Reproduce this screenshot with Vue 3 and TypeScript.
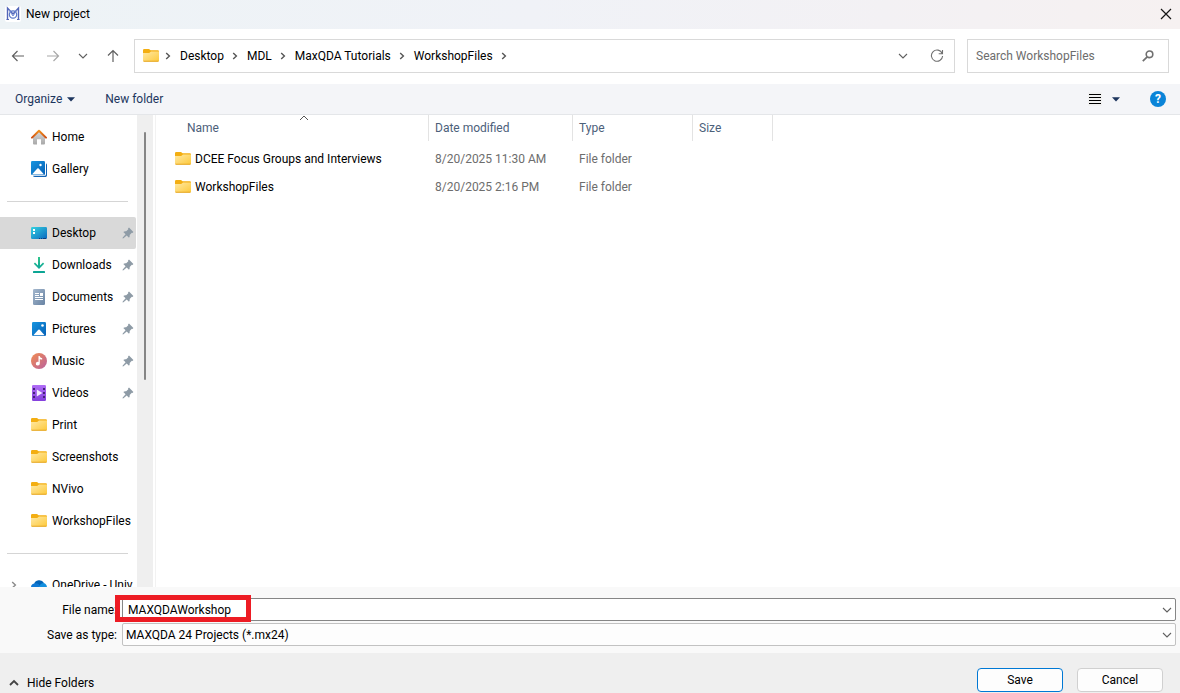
<script setup lang="ts">
import { ref } from 'vue'

interface Place {
  name: string
  icon: string
  pinned?: boolean
  selected?: boolean
}

interface Entry {
  name: string
  modified: string
  type: string
  size: string
}

const crumbs: string[] = ['Desktop', 'MDL', 'MaxQDA Tutorials', 'WorkshopFiles']

const placeGroups: Place[][] = [
  [
    { name: 'Home', icon: 'home' },
    { name: 'Gallery', icon: 'gallery' },
  ],
  [
    { name: 'Desktop', icon: 'desktop', pinned: true, selected: true },
    { name: 'Downloads', icon: 'downloads', pinned: true },
    { name: 'Documents', icon: 'documents', pinned: true },
    { name: 'Pictures', icon: 'pictures', pinned: true },
    { name: 'Music', icon: 'music', pinned: true },
    { name: 'Videos', icon: 'videos', pinned: true },
    { name: 'Print', icon: 'folder' },
    { name: 'Screenshots', icon: 'folder' },
    { name: 'NVivo', icon: 'folder' },
    { name: 'WorkshopFiles', icon: 'folder' },
  ],
]

const entries: Entry[] = [
  { name: 'DCEE Focus Groups and Interviews', modified: '8/20/2025 11:30 AM', type: 'File folder', size: '' },
  { name: 'WorkshopFiles', modified: '8/20/2025 2:16 PM', type: 'File folder', size: '' },
]

const query = ref('')
const fileName = ref('MAXQDAWorkshop')
const fileType = ref('mx24')
</script>

<template>
  <div class="dialog">
    <svg class="defs" aria-hidden="true">
      <defs>
        <linearGradient id="g-folder" x1="0" y1="0" x2="1" y2="1">
          <stop offset="0" stop-color="#ffe9a6" /><stop offset="1" stop-color="#fdc93a" />
        </linearGradient>
        <linearGradient id="g-blue" x1="0" y1="0" x2="1" y2="1">
          <stop offset="0" stop-color="#1795e0" /><stop offset="1" stop-color="#0560b6" />
        </linearGradient>
        <linearGradient id="g-desktop" x1="0" y1="0" x2="1" y2="1">
          <stop offset="0" stop-color="#35d3e0" /><stop offset="1" stop-color="#0b67bf" />
        </linearGradient>
        <linearGradient id="g-down" x1="0" y1="0" x2="0" y2="1">
          <stop offset="0" stop-color="#2fc48a" /><stop offset="1" stop-color="#0ba59a" />
        </linearGradient>
        <linearGradient id="g-doc" x1="0" y1="0" x2="1" y2="1">
          <stop offset="0" stop-color="#a5b8ce" /><stop offset="1" stop-color="#6883a3" />
        </linearGradient>
        <linearGradient id="g-music" x1="0" y1="0" x2="1" y2="1">
          <stop offset="0" stop-color="#f28c50" /><stop offset="1" stop-color="#b9619e" />
        </linearGradient>
        <linearGradient id="g-video" x1="0" y1="0" x2="0" y2="1">
          <stop offset="0" stop-color="#b06df6" /><stop offset="1" stop-color="#8440dd" />
        </linearGradient>
        <linearGradient id="g-house" x1="0" y1="0" x2="0" y2="1">
          <stop offset="0" stop-color="#d8d8d8" /><stop offset="1" stop-color="#a8a8a8" />
        </linearGradient>
        <linearGradient id="g-roof" x1="0" y1="0" x2="0" y2="1">
          <stop offset="0" stop-color="#f0901c" /><stop offset="1" stop-color="#cf4f12" />
        </linearGradient>
      </defs>
      <symbol id="i-folder" viewBox="0 0 16 16">
        <path d="M0 2.2Q0 1 1.2 1H6L7.6 2.300H14.9Q16 2.300 16 3.500V7H0Z" fill="#f3ae12" />
        <path d="M0 5H6.200L8 3.400H16V12.600Q16 13.600 15 13.600H1Q0 13.600 0 12.600Z" fill="url(#g-folder)" />
        <path d="M.1 12.800Q.3 13.700 1.200 13.700H14.800Q15.700 13.700 15.900 12.800Z" fill="#e5a520" />
      </symbol>
      <symbol id="i-home" viewBox="0 0 16 16">
        <path d="M2 7.5L8 2L14 7.5V14.4Q14 15.5 13 15.5H10V10.2H6V15.5H3Q2 15.5 2 14.4Z" fill="url(#g-house)" />
        <path d="M1 8.600L8 1.700L15 8.600" fill="none" stroke="url(#g-roof)" stroke-width="2" stroke-linecap="round" stroke-linejoin="round" />
      </symbol>
      <symbol id="i-gallery" viewBox="0 0 16 16">
        <path d="M2 14.800H13.600Q15 14.800 15 13.300V2.200Q16 2.600 16 4V14.6Q16 16 14.6 16H4Q2.200 16 2 14.800Z" fill="#1264b5" />
        <rect width="14" height="14" rx="1.2" fill="url(#g-blue)" />
        <path d="M1 13.400L6.300 7.600Q7 7 7.700 7.600L13 13.400Z" fill="#fff" />
        <circle cx="9.5" cy="4" r="1.200" fill="#fff" />
      </symbol>
      <symbol id="i-desktop" viewBox="0 0 16 16">
        <rect y="2" width="16" height="12" rx="1.2" fill="url(#g-desktop)" />
        <path d="M2 4h2v2h-2zM2 7h2v2h-2z" fill="#fff" />
        <path d="M8 13h1v1h-1zM10 13h1v1h-1zM12 13h3v1h-3z" fill="#123c78" />
      </symbol>
      <symbol id="i-downloads" viewBox="0 0 16 16">
        <path d="M7 0H9V8.500L12 5.500L13.200 6.700L8 12L2.800 6.700L4 5.500L7 8.500Z" fill="url(#g-down)" />
        <rect x="2" y="14" width="12" height="2" rx=".6" fill="#0ba594" />
      </symbol>
      <symbol id="i-documents" viewBox="0 0 16 16">
        <rect x="2" y="0" width="12" height="16" rx="1.3" fill="url(#g-doc)" />
        <path d="M4 4h4v1h-4zM4 6h4v1h-4zM9 4h3v3h-3zM4 8h8v1h-8zM4 10h8v1h-8z" fill="#fff" />
      </symbol>
      <symbol id="i-pictures" viewBox="0 0 16 16">
        <rect x="1" y="1" width="14" height="14" rx="1.2" fill="url(#g-blue)" />
        <path d="M2.400 14.200L7.300 8.800Q8 8.200 8.700 8.800L13.600 14.200Z" fill="#fff" />
        <circle cx="11.5" cy="4.500" r="1.300" fill="#fff" />
      </symbol>
      <symbol id="i-music" viewBox="0 0 16 16">
        <circle cx="8" cy="8" r="8" fill="url(#g-music)" />
        <path d="M7.500 3H8.600Q9 5 11.200 5.200V6.600Q9.600 6.600 8.800 6V10.600A2 1.900 0 1 1 7.500 8.900Z" fill="#fff" />
      </symbol>
      <symbol id="i-videos" viewBox="0 0 16 16">
        <rect x="1" y="0" width="14" height="16" rx="1.2" fill="url(#g-video)" />
        <path d="M2 3h2v2h-2zM2 7h2v2h-2zM2 11h2v2h-2zM12 3h2v2h-2zM12 7h2v2h-2zM12 11h2v2h-2z" fill="#452378" />
        <path d="M5.800 4.600L11.400 8L5.800 11.400Z" fill="#f5edff" />
      </symbol>
      <symbol id="i-onedrive" viewBox="0 0 16 16">
        <path d="M3 7.500A5.400 5.400 0 0 1 13 6L8 11Z" fill="#0364b8" />
        <path d="M3.900 6.400A4 4 0 0 0 0 10.400A4 4 0 0 0 4 14.300H10L8 7.600Q6.200 6 3.900 6.400Z" fill="#0f78d4" />
        <path d="M12.700 6Q15.800 6.800 16 10.400Q15.800 14 12.400 14.300H4L8 9.500Q9.600 6 12.700 6Z" fill="#1490df" />
      </symbol>
      <symbol id="i-pin" viewBox="0 0 12 12">
        <path d="M7 .6L11.400 5L10.500 6L9.800 5.700L7.700 7.900Q8 9.500 7 10.700L4.700 8.400L1.500 11.300L.6 11.400L.7 10.500L3.600 7.300L1.300 5Q2.600 3.900 4.200 4.300L6.300 2.200L6 1.500Z" fill="#8e9ba6" />
      </symbol>
      <symbol id="i-chevron-down" viewBox="0 0 10 10">
        <path d="M1 3L5 7L9 3" fill="none" stroke="currentColor" stroke-width="1.100" />
      </symbol>
      <symbol id="i-chevron-right" viewBox="0 0 6 8">
        <path d="M1.200 1L4.400 4L1.200 7" fill="none" stroke="currentColor" stroke-width="1.400" />
      </symbol>
      <symbol id="i-caret" viewBox="0 0 8 5">
        <path d="M0 .3H8L4 4.600Z" fill="currentColor" />
      </symbol>
    </svg>

    <header class="title-bar">
      <svg class="app-icon" viewBox="0 0 16 16" aria-hidden="true">
        <rect width="16" height="16" rx="2" fill="#fff" />
        <path d="M2.500 14V2L8 8L13.500 2V14" fill="none" stroke="#5366b8" stroke-width="1.400" />
        <path d="M1.500 13.500H4M12 13.500H14.500" stroke="#5366b8" />
        <circle cx="8" cy="8.500" r="3.700" fill="none" stroke="#5a78c8" stroke-width="1.200" />
        <path d="M4 4L8 10L12 4" fill="none" stroke="#7389d0" />
      </svg>
      <h1>New project</h1>
      <button class="close" type="button" aria-label="Close">
        <svg viewBox="0 0 12 12"><path d="M1 1L11 11M11 1L1 11" fill="none" stroke="#161616" stroke-width="1.200" /></svg>
      </button>
    </header>

    <div class="nav-bar">
      <div class="history">
        <button type="button" aria-label="Back">
          <svg viewBox="0 0 14 14"><path d="M13 7H1.500M6.500 2L1.500 7L6.500 12" fill="none" stroke="#606060" stroke-width="1.200" /></svg>
        </button>
        <button type="button" aria-label="Forward" class="forward">
          <svg viewBox="0 0 14 14"><path d="M1 7H12.500M7.500 2L12.500 7L7.500 12" fill="none" stroke="#a8a8a8" stroke-width="1.200" /></svg>
        </button>
        <button type="button" aria-label="Recent locations">
          <svg class="small"><use href="#i-chevron-down" /></svg>
        </button>
        <button type="button" aria-label="Up">
          <svg viewBox="0 0 14 14"><path d="M7 13V1.500M2 6.500L7 1.500L12 6.500" fill="none" stroke="#606060" stroke-width="1.200" /></svg>
        </button>
      </div>

      <nav class="address" aria-label="Address">
        <svg class="icon"><use href="#i-folder" /></svg>
        <svg class="crumb-sep"><use href="#i-chevron-right" /></svg>
        <template v-for="crumb in crumbs" :key="crumb">
          <a href="#">{{ crumb }}</a>
          <svg class="crumb-sep"><use href="#i-chevron-right" /></svg>
        </template>
        <button type="button" class="expand" aria-label="Previous locations">
          <svg class="small"><use href="#i-chevron-down" /></svg>
        </button>
        <button type="button" class="refresh" aria-label="Refresh">
          <svg viewBox="0 0 14 14">
            <path d="M12.200 4.500A5.600 5.600 0 1 0 12.600 7M12.500 1V4.800H8.700" fill="none" stroke="#707070" stroke-width="1.100" />
          </svg>
        </button>
      </nav>

      <label class="search">
        <input v-model="query" type="text" placeholder="Search WorkshopFiles" aria-label="Search WorkshopFiles" />
        <svg viewBox="0 0 12 12" aria-hidden="true">
          <circle cx="7.500" cy="4.300" r="3.300" fill="none" stroke="#707070" stroke-width="1.600" />
          <path d="M5.200 6.800L.8 11.200" stroke="#707070" stroke-width="1.700" />
        </svg>
      </label>
    </div>

    <div class="tool-bar">
      <button type="button" class="organize">Organize <svg class="caret"><use href="#i-caret" /></svg></button>
      <button type="button">New folder</button>
      <button type="button" class="view" aria-label="Change view">
        <svg class="list" viewBox="0 0 14 14">
          <rect width="14" height="14" fill="#f1f1f1" />
          <path d="M1 2.500H13M1 5.500H13M1 8.500H13M1 11.500H13" stroke="#000" />
        </svg>
        <svg class="caret"><use href="#i-caret" /></svg>
      </button>
      <button type="button" class="help" aria-label="Help">?</button>
    </div>

    <main class="content">
      <nav class="places" aria-label="Places">
        <ul v-for="(group, index) in placeGroups" :key="index">
          <li v-for="place in group" :key="place.name">
            <a href="#" :class="{ selected: place.selected }">
              <svg class="icon"><use :href="'#i-' + place.icon" /></svg>
              <span>{{ place.name }}</span>
              <svg v-if="place.pinned" class="pin"><use href="#i-pin" /></svg>
            </a>
          </li>
        </ul>
        <ul>
          <li>
            <a href="#" class="tree">
              <svg class="tree-arrow"><use href="#i-chevron-right" /></svg>
              <svg class="icon"><use href="#i-onedrive" /></svg>
              <span>OneDrive - Univ</span>
            </a>
          </li>
        </ul>
      </nav>
      <div class="scroll-track"><div class="scroll-thumb"></div></div>

      <section class="files">
        <table>
          <colgroup>
            <col class="c-name" /><col class="c-date" /><col class="c-type" /><col class="c-size" />
          </colgroup>
          <thead>
            <tr>
              <th scope="col" aria-sort="ascending">
                Name
                <svg class="sort" viewBox="0 0 10 6"><path d="M1 5L5 1L9 5" fill="none" stroke="#555" /></svg>
              </th>
              <th scope="col">Date modified</th>
              <th scope="col">Type</th>
              <th scope="col">Size</th>
            </tr>
          </thead>
          <tbody>
            <tr v-for="entry in entries" :key="entry.name">
              <td><span class="file"><svg class="icon"><use href="#i-folder" /></svg>{{ entry.name }}</span></td>
              <td>{{ entry.modified }}</td>
              <td>{{ entry.type }}</td>
              <td>{{ entry.size }}</td>
            </tr>
          </tbody>
        </table>
      </section>
    </main>

    <form class="fields" @submit.prevent>
      <label for="file-name">File name:</label>
      <div class="combo name-combo">
        <input id="file-name" v-model="fileName" type="text" />
        <svg class="small"><use href="#i-chevron-down" /></svg>
        <div class="highlight"></div>
      </div>
      <label for="file-type">Save as type:</label>
      <div class="combo type-combo">
        <select id="file-type" v-model="fileType">
          <option value="mx24">MAXQDA 24 Projects (*.mx24)</option>
        </select>
        <svg class="small"><use href="#i-chevron-down" /></svg>
      </div>
    </form>

    <footer class="actions">
      <button type="button" class="hide-folders">
        <svg viewBox="0 0 10 10"><path d="M1 7L5 3L9 7" fill="none" stroke="#444" stroke-width="1.800" /></svg>
        Hide Folders
      </button>
      <button type="button" class="push primary">Save</button>
      <button type="button" class="push">Cancel</button>
    </footer>
  </div>
</template>

<style>
body {
  margin: 0;
  overflow: hidden;
}
</style>

<style scoped>
.dialog {
  display: flex;
  flex-direction: column;
  height: 100vh;
  background: #fff;
  color: #000;
  font: 12px/16px 'Segoe UI', Roboto, 'Open Sans', sans-serif;
}

.dialog * {
  box-sizing: border-box;
}

.defs {
  position: absolute;
  width: 0;
  height: 0;
}

svg {
  display: block;
  flex: none;
}

button,
input,
select {
  margin: 0;
  padding: 0;
  border: 0;
  background: none;
  color: inherit;
  font: inherit;
  outline: none;
}

a {
  color: inherit;
  text-decoration: none;
}

.icon {
  width: 16px;
  height: 16px;
}

.small {
  width: 10px;
  height: 10px;
  color: #606060;
}

.caret {
  width: 8px;
  height: 5px;
}

.title-bar {
  display: flex;
  align-items: center;
  flex: none;
  height: 29px;
  padding: 0 8px 2px 5px;
  background: linear-gradient(90deg, #edf3f6, #f0f2f7 45%, #f3f1f4 75%, #f6f1f1);
}

.app-icon {
  width: 16px;
  height: 16px;
  margin-right: 5px;
}

h1 {
  margin: 0;
  font-size: 12px;
  font-weight: 400;
}

.close {
  margin-left: auto;
}

.close svg {
  width: 12px;
  height: 12px;
}

.nav-bar {
  display: flex;
  align-items: center;
  flex: none;
  height: 55px;
  padding: 0 11px 1px;
}

.history {
  display: flex;
  align-items: center;
  gap: 18px;
  width: 123px;
}

.history svg {
  width: 14px;
  height: 14px;
}

.history .forward {
  margin-left: 3px;
}

.history .small {
  width: 10px;
  height: 10px;
}

.address {
  display: flex;
  align-items: center;
  flex: 1;
  height: 34px;
  padding: 0 10px 0 8px;
  border: 1px solid #d9d9d9;
}

.crumb-sep {
  width: 6px;
  height: 8px;
  margin: 0 9px 0 8px;
  color: #555;
}

.address .icon {
  margin-right: -2px;
}

.expand {
  margin-left: auto;
}

.refresh {
  margin-left: 22px;
}

.refresh svg {
  width: 14px;
  height: 14px;
}

.search {
  display: flex;
  align-items: center;
  width: 202px;
  height: 34px;
  margin-left: 12px;
  padding: 0 14px 0 8px;
  border: 1px solid #d9d9d9;
}

.search input {
  flex: 1;
  min-width: 0;
}

.search input::placeholder {
  color: #6d6d6d;
  opacity: 1;
}

.search svg {
  width: 12px;
  height: 12px;
}

.tool-bar {
  display: flex;
  align-items: center;
  flex: none;
  height: 31px;
  padding: 0 14px 0 15px;
  border-bottom: 1px solid #e4e6e9;
  background: #f4f5f8;
  color: #1d355e;
}

.organize {
  display: flex;
  align-items: center;
  gap: 5px;
  margin-right: 30px;
}

.view {
  display: flex;
  align-items: center;
  gap: 10px;
  margin-left: auto;
}

.list {
  width: 14px;
  height: 14px;
}

.help {
  width: 16px;
  height: 16px;
  margin-left: 30px;
  border-radius: 50%;
  background: #0a84d8;
  color: #fff;
  font-weight: 700;
}

.content {
  display: flex;
  flex: 1;
  min-height: 0;
}

.places {
  width: 137px;
  padding: 6px 1px 0 0;
  overflow: hidden;
}

ul {
  margin: 0;
  padding: 0;
  list-style: none;
}

ul + ul::before {
  content: '';
  display: block;
  height: 1px;
  margin: 16px 8px 15px 7px;
  background: #d5d5d5;
}

.places a {
  display: flex;
  align-items: center;
  gap: 5px;
  height: 32px;
  padding: 0 2px 0 31px;
  border-radius: 0 2px 2px 0;
  white-space: nowrap;
}

.places a.selected {
  background: #d9d9d9;
}

.places a.tree {
  padding-left: 11px;
}

.tree-arrow {
  width: 6px;
  height: 8px;
  margin-right: 9px;
  color: #8a8a8a;
}

.pin {
  width: 12px;
  height: 12px;
  margin-left: auto;
}

.scroll-track {
  width: 16px;
  padding: 17px 7px 0;
  background: #efefef;
}

.scroll-thumb {
  width: 2px;
  height: 248px;
  border-radius: 1px;
  background: #858585;
}

.files {
  flex: 1;
  margin-left: 2px;
  border-left: 1px solid #f2f2f2;
}

table {
  width: 617px;
  border-collapse: separate;
  border-spacing: 0;
  table-layout: fixed;
}

.c-name {
  width: 273px;
}

.c-date {
  width: 144px;
}

.c-type {
  width: 120px;
}

.c-size {
  width: 80px;
}

th {
  position: relative;
  height: 26px;
  padding: 0 0 0 6px;
  border-right: 1px solid #e3e3e3;
  color: #4c607a;
  font-weight: 400;
  text-align: left;
}

th:first-child {
  padding-left: 31px;
}

.sort {
  position: absolute;
  top: 0;
  left: 143px;
  width: 10px;
  height: 6px;
}

td {
  height: 28px;
  padding: 0 0 0 6px;
  color: #6d6d6d;
}

td:first-child {
  padding-left: 19px;
  color: #000;
}

tbody::before {
  content: '';
  display: block;
  height: 4px;
}

.file {
  display: flex;
  align-items: center;
  gap: 4px;
}

.fields {
  display: grid;
  grid-template-columns: 117px 1fr;
  align-items: center;
  gap: 2px 5px;
  flex: none;
  padding: 11px 4px 7px 0;
  background: #f9f9f9;
}

.fields label {
  text-align: right;
}

.combo {
  position: relative;
  display: flex;
  align-items: center;
  height: 23px;
  padding-right: 3px;
  border: 1px solid #c2c2c2;
  border-radius: 2px;
  background: #fdfdfd;
}

.name-combo {
  border-color: #868686;
  background: #fff;
}

.combo input,
.combo select {
  flex: 1;
  min-width: 0;
  height: 21px;
  padding-left: 5px;
}

.combo select {
  padding-left: 3px;
  appearance: none;
}

.highlight {
  position: absolute;
  top: -4px;
  left: -8px;
  width: 136px;
  height: 27px;
  border: 5px solid #ed1c24;
  pointer-events: none;
}

.actions {
  display: flex;
  align-items: flex-end;
  gap: 14px;
  flex: none;
  height: 40px;
  padding: 0 17px 1px 9px;
  background: #efefef;
}

.hide-folders {
  display: flex;
  align-items: center;
  gap: 8px;
  height: 18px;
  margin-right: auto;
}

.hide-folders svg {
  width: 10px;
  height: 10px;
}

.push {
  width: 86px;
  height: 24px;
  border: 1px solid #d0d0d0;
  border-radius: 4px;
  background: #fdfdfd;
}

.push.primary {
  border-color: #0078d4;
}
</style>
